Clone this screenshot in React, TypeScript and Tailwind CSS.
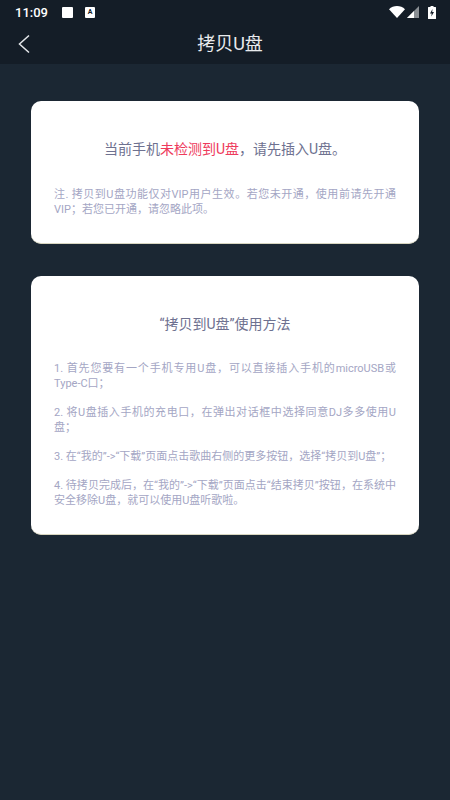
export default function App() {
  const para = "m-0 text-justify";
  return (
    <div className="w-[450px] h-[800px] flex flex-col bg-[#1b2733] overflow-hidden" style={{ fontFamily: 'Roboto, "Noto Sans CJK SC", sans-serif' }}>
      <header className="h-[64px] shrink-0 bg-[#141d27] flex flex-col">
        <div className="h-[24px] flex items-center pl-[15px] pr-[14px] text-white">
          <span className="text-[13px] font-medium w-[47px] mt-[1px]">11:09</span>
          <span className="w-[11px] h-[11px] bg-white rounded-[1px]" />
          <span className="w-[10px] h-[11px] bg-white rounded-[1px] ml-[12px] flex items-center justify-center text-[7px] leading-none font-bold text-[#141d27]">A</span>
          <div className="ml-auto flex items-center">
            <svg width="16" height="12" viewBox="0 0 16 12"><path d="M0 3.2C2.2 1.2 5 0 8 0s5.800 1.200 8 3.200L8 12z" fill="#fff" /></svg>
            <svg width="12" height="12" viewBox="0 0 12 12" className="ml-[2px]"><path d="M12 0v12H0z" fill="#8a8f94" /><path d="M7 5v7H0z" fill="#fff" /></svg>
            <svg width="8" height="13" viewBox="0 0 8 13" className="ml-[9px]"><path d="M2.500 0h3v1H7.500a.5.5 0 0 1 .5.500V12.500a.5.5 0 0 1-.5.500H.5a.5.500 0 0 1-.5-.500V1.500a.5.5 0 0 1 .5-.500H2.500z" fill="#fff" /><path d="M4.500 3L2 7.500h1.700L3.300 10.500 6 6H4.200z" fill="#141d27" /></svg>
          </div>
        </div>
        <div className="relative flex-1 flex items-center justify-center pl-[10px]">
          <svg width="14" height="20" viewBox="0 0 14 20" className="absolute left-[17px] top-[10px]" fill="none" stroke="#e4e7ea" strokeWidth="1.500"><path d="M12 1.500L2.500 10l9.500 8.500" /></svg>
          <h1 className="m-0 text-[18px] font-normal text-[#e8eaed] leading-none">拷贝U盘</h1>
        </div>
      </header>
      <main className="flex flex-col gap-[32px] px-[31px] pt-[37px]">
        <section className="h-[143px] bg-white rounded-[10px] px-[23px] pt-[38px] border-b border-[#d8d6c0]">
          <p className="m-0 text-center text-[14px] leading-[20px] text-[#6e7190]">当前手机<span className="text-[#ee3a5c]">未检测到U盘</span>，请先插入U盘。</p>
          <p className={`${para} mt-[28px] text-[11px] leading-[15px] text-[#a4a6c4]`}>注. 拷贝到U盘功能仅对VIP用户生效。若您未开通，使用前请先开通VIP；若您已开通，请忽略此项。</p>
        </section>
        <section className="h-[259px] bg-white rounded-[10px] px-[23px] pt-[38px] border-b border-[#d8d6c0]">
          <h2 className="m-0 text-center text-[14px] leading-[20px] font-normal text-[#6e7190]">“拷贝到U盘”使用方法</h2>
          <div className="mt-[27px] flex flex-col gap-[14px] text-[11px] leading-[15px] text-[#a4a6c4]">
            <p className={para}>1. 首先您要有一个手机专用U盘，可以直接插入手机的microUSB或Type-C口；</p>
            <p className={para}>2. 将U盘插入手机的充电口，在弹出对话框中选择同意DJ多多使用U盘；</p>
            <p className={para}>3. 在“我的”-&gt;“下载”页面点击歌曲右侧的更多按钮，选择“拷贝到U盘”；</p>
            <p className={para}>4. 待拷贝完成后，在“我的”-&gt;“下载”页面点击“结束拷贝”按钮，在系统中安全移除U盘，就可以使用U盘听歌啦。</p>
          </div>
        </section>
      </main>
    </div>
  );
}
